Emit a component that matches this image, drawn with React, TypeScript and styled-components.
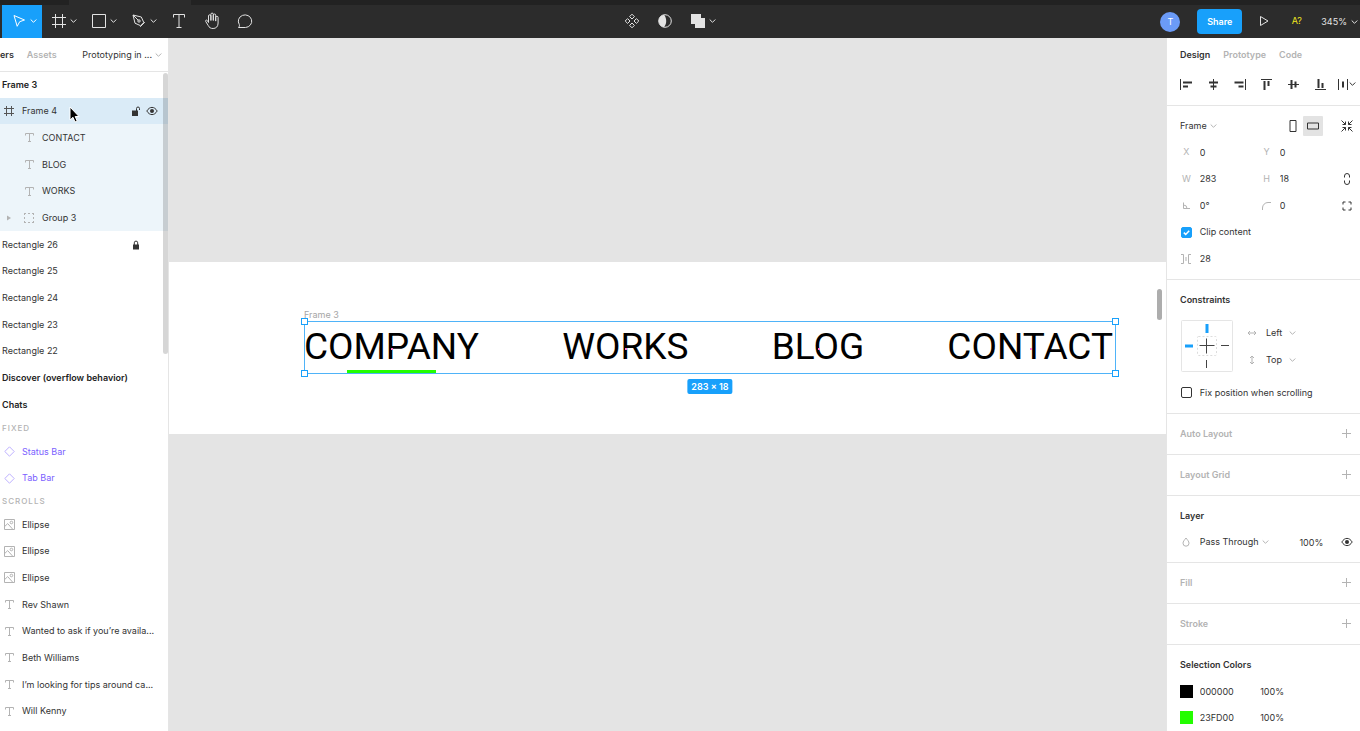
import React from "react";
import styled, { createGlobalStyle, css } from "styled-components";

const GlobalStyle = createGlobalStyle`
  *, *::before, *::after { box-sizing: border-box; }
  body { margin: 0; overflow: hidden; }
  button, input, select { font: inherit; color: inherit; }
  ul { list-style: none; margin: 0; padding: 0; }
`;

const plain = css`
  border: 0;
  padding: 0;
  margin: 0;
  background: none;
`;

/* ---------- Shell ---------- */

const Shell = styled.div`
  display: flex;
  flex-direction: column;
  height: 100vh;
  overflow: hidden;
  font-family: Inter, "Liberation Sans", sans-serif;
  font-size: 9px;
  line-height: 16px;
  color: #333;
  background: #fff;
`;

const WindowTabs = styled.div`
  flex: none;
  height: 5px;
  padding-left: 69px;
  background: #222;
`;

const WindowTab = styled.div`
  width: 122px;
  height: 5px;
  background: #2c2c2c;
`;

const Toolbar = styled.header`
  flex: none;
  display: grid;
  grid-template-columns: 1fr auto 1fr;
  height: 33px;
  background: #2c2c2c;
  color: #e3e3e3;
`;

const ToolGroup = styled.div<{ $side: "left" | "middle" | "right" }>`
  display: flex;
  align-items: center;
  justify-content: ${(p) => (p.$side === "right" ? "flex-end" : "flex-start")};
  padding-left: ${(p) => (p.$side === "left" ? 2 : 0)}px;
  padding-right: ${(p) => (p.$side === "middle" ? 24 : 0)}px;
`;

const Tool = styled.button<{ $active?: boolean; $menu?: boolean }>`
  ${plain}
  display: flex;
  align-items: center;
  justify-content: center;
  gap: 4px;
  width: ${(p) => (p.$menu ? 40 : 33)}px;
  height: 33px;
  padding: 0 0 1px ${(p) => (p.$menu ? 5 : 0)}px;
  background: ${(p) => (p.$active ? "#18a0fb" : "transparent")};
`;

const Avatar = styled.button`
  ${plain}
  width: 20px;
  height: 20px;
  margin-right: 17px;
  border-radius: 50%;
  background: #6b9bf7;
  color: #fff;
`;

const Share = styled.button`
  ${plain}
  width: 45px;
  height: 25px;
  margin-right: 5px;
  border-radius: 4px;
  background: #18a0fb;
  color: #fff;
  font-weight: 600;
`;

const FontWarning = styled(Tool)`
  color: #f0e61e;
`;

const ZoomMenu = styled.button`
  ${plain}
  display: flex;
  align-items: center;
  gap: 4px;
  padding: 0 2px 0 8px;
`;

const Main = styled.div`
  flex: 1;
  min-height: 0;
  display: grid;
  grid-template-columns: 169px 1fr 194px;
`;

/* ---------- Layers panel ---------- */

const LayersPanel = styled.aside`
  position: relative;
  overflow: hidden;
  border-right: 1px solid #e5e5e5;
`;

const PanelTabs = styled.div`
  display: flex;
  align-items: center;
  height: 33px;
  box-shadow: 0 1px 0 #e5e5e5;
`;

const Tab = styled.button<{ $on?: boolean }>`
  ${plain}
  margin-right: 13px;
  font-weight: 600;
  color: ${(p) => (p.$on ? "#333" : "#b3b3b3")};
`;

const PageMenu = styled.button`
  ${plain}
  display: flex;
  align-items: center;
  gap: 3px;
  margin-left: auto;
  padding-right: 6px;
`;

const rowHeight = css`
  height: 27px;
  &:nth-child(3n + 2) {
    height: 26px;
  }
`;

const LayerRow = styled.li<{ $tone?: "selected" | "child" }>`
  ${rowHeight}
  position: relative;
  display: flex;
  align-items: center;
  padding-right: 8px;
  background: ${(p) =>
    p.$tone === "selected" ? "#daebf7" : p.$tone === "child" ? "#edf5fa" : "transparent"};
`;

const Slot = styled.span`
  flex: none;
  display: flex;
  align-items: center;
  justify-content: center;
  width: 20px;
  height: 16px;
  padding-right: 2px;
  color: #b3b3b3;
`;

const LayerName = styled.button<{ $bold?: boolean; $component?: boolean }>`
  ${plain}
  flex: 1;
  min-width: 0;
  padding-left: 2px;
  text-align: left;
  white-space: nowrap;
  overflow: hidden;
  text-overflow: ellipsis;
  font-weight: ${(p) => (p.$bold ? 600 : 400)};
  color: ${(p) => (p.$component ? "#7b61ff" : p.$bold ? "#222" : "#333")};
`;

const RowAction = styled.button`
  ${plain}
  display: flex;
  align-items: center;
  justify-content: center;
  width: 16px;
  height: 16px;
  color: #333;
`;

const GroupLabel = styled.h3`
  height: 20px;
  margin: 0;
  padding-left: 2px;
  font-size: 8px;
  line-height: 20px;
  font-weight: 500;
  letter-spacing: 1px;
  color: #b3b3b3;
`;

const ListScrollbar = styled.div`
  position: absolute;
  top: 35px;
  right: 0;
  width: 5px;
  height: 281px;
  border-radius: 3px;
  background: rgba(0, 0, 0, 0.16);
`;

const Pointer = styled.svg`
  position: absolute;
  left: 68px;
  top: 8px;
`;

/* ---------- Canvas ---------- */

const Canvas = styled.main`
  position: relative;
  min-width: 0;
  padding-top: 224px;
  background: #e4e4e4;
`;

const Artboard = styled.section`
  height: 172px;
  padding: 45px 50px 0 135px;
  background: #fff;
`;

const FrameLabel = styled.div`
  height: 14px;
  line-height: 16px;
  color: #a6a6a6;
`;

const SelectedFrame = styled.div`
  position: relative;
  display: flex;
  justify-content: space-between;
  height: 53px;
  padding-right: 3px;
  outline: 1px solid #4fb3f8;
  outline-offset: -1px;
`;

const NavText = styled.span`
  position: relative;
  font-family: Roboto, sans-serif;
  font-size: 37px;
  line-height: 52px;
  color: #000;
`;

const CenterDot = styled.i`
  position: absolute;
  left: 50%;
  top: 50%;
  width: 2px;
  height: 2px;
  background: #ff7ad0;
`;

const Underline = styled.i`
  position: absolute;
  left: 43px;
  bottom: 1px;
  width: 89px;
  height: 3px;
  background: #23fd00;
`;

const Handle = styled.i<{ $x: "left" | "right"; $y: "top" | "bottom" }>`
  position: absolute;
  ${(p) => p.$x}: -3px;
  ${(p) => p.$y}: -3px;
  width: 7px;
  height: 7px;
  border: 1px solid #18a0fb;
  background: #fff;
`;

const SizeBadge = styled.output`
  position: absolute;
  left: 50%;
  top: 58px;
  transform: translateX(-50%);
  height: 15px;
  padding: 0 4px;
  border-radius: 2px;
  background: #18a0fb;
  color: #fff;
  font-weight: 600;
  line-height: 15px;
  white-space: nowrap;
`;

const CanvasScrollbar = styled.div`
  position: absolute;
  right: 4px;
  top: 251px;
  width: 5px;
  height: 31px;
  border-radius: 3px;
  background: #adadad;
`;

/* ---------- Inspector ---------- */

const Inspector = styled.aside`
  overflow: hidden;
  border-left: 1px solid #e5e5e5;
`;

const InspectorTabs = styled.div`
  display: flex;
  align-items: center;
  height: 33px;
  padding-left: 13px;
`;

const AlignBar = styled.div`
  display: grid;
  grid-template-columns: repeat(7, 1fr);
  height: 35px;
  padding: 0 0 8px 6px;
  border-bottom: 1px solid #e5e5e5;
`;

const IconButton = styled.button<{ $pressed?: boolean; $box?: boolean; $muted?: boolean }>`
  ${plain}
  display: flex;
  align-items: center;
  justify-content: center;
  width: ${(p) => (p.$box ? "20px" : "auto")};
  height: ${(p) => (p.$box ? "20px" : "auto")};
  border-radius: 1px;
  background: ${(p) => (p.$pressed ? "#e3e3e3" : "transparent")};
  color: ${(p) => (p.$muted ? "#b3b3b3" : "#333")};
`;

const Section = styled.section`
  padding: 6px 0 7px 6px;
  border-bottom: 1px solid #e5e5e5;
`;

const Row = styled.div`
  ${rowHeight}
  display: grid;
  grid-template-columns: repeat(7, 1fr);
  align-items: center;
`;

const Cell = styled.div<{ $from: number; $to: number; $inset?: boolean; $end?: boolean }>`
  grid-column: ${(p) => p.$from} / ${(p) => p.$to};
  grid-row: 1;
  display: flex;
  align-items: center;
  justify-content: ${(p) => (p.$end ? "flex-end" : "flex-start")};
  padding-left: ${(p) => (p.$inset ? 7 : 0)}px;
  padding-right: ${(p) => (p.$end ? 10 : 0)}px;
  min-width: 0;
`;

const Glyph = styled.label<{ $from: number }>`
  grid-column: ${(p) => p.$from};
  grid-row: 1;
  display: flex;
  align-items: center;
  justify-content: center;
  color: #b3b3b3;
`;

const LastIcon = styled(IconButton)`
  grid-column: 7;
  grid-row: 1;
`;

const Title = styled.h2<{ $muted?: boolean }>`
  margin: 0;
  font-size: 9px;
  font-weight: 600;
  white-space: nowrap;
  color: ${(p) => (p.$muted ? "#b3b3b3" : "#333")};
`;

const Field = styled.input`
  ${plain}
  width: 100%;
  min-width: 0;
  height: 20px;
`;

const OpacityField = styled(Field)`
  text-align: right;
`;

const Select = styled.select`
  ${plain}
  appearance: none;
  margin-right: 3px;
`;

const Check = styled.input`
  appearance: none;
  width: 11px;
  height: 11px;
  margin: 0;
  border: 1px solid #333;
  border-radius: 2px;
  &:checked {
    border-color: #18a0fb;
    background: #18a0fb;
  }
`;

const CheckHolder = styled.span`
  grid-column: 1;
  grid-row: 1;
  position: relative;
  display: flex;
  align-items: center;
  justify-content: center;
  svg {
    position: absolute;
    pointer-events: none;
  }
`;

const CheckLabel = styled.label`
  grid-column: 2 / 8;
  grid-row: 1;
  white-space: nowrap;
`;

const ConstraintBody = styled.div`
  display: flex;
  align-items: center;
  gap: 9px;
  padding: 6px 0 6px 7px;
`;

const ConstraintMenus = styled.div`
  display: flex;
  flex-direction: column;
`;

const ConstraintMenu = styled.label`
  display: flex;
  align-items: center;
  gap: 3px;
  height: 27px;
`;

const Swatch = styled.button<{ $color: string }>`
  ${plain}
  width: 13px;
  height: 13px;
  background: ${(p) => p.$color};
`;

/* ---------- Icons ---------- */

type IconProps = { w?: number; h?: number; color?: string; children: React.ReactNode };
const Icon = ({ w = 16, h = 16, color = "currentColor", children }: IconProps) => (
  <svg width={w} height={h} viewBox={`0 0 ${w} ${h}`} fill="none" stroke={color} aria-hidden="true">
    {children}
  </svg>
);

const Chevron = ({ color = "currentColor" }: { color?: string }) => (
  <Icon w={7} h={6} color={color}><path d="M.7 1.5 3.5 4.3 6.3 1.5" /></Icon>
);

const FrameToolIcon = () => (
  <Icon w={14} h={14}><path d="M3.5 0v14M10.5 0v14M0 3.5h14M0 10.5h14" /></Icon>
);

const FrameLayerIcon = () => (
  <Icon w={10} h={10} color="#555"><path d="M2.5 0v10M7.5 0v10M0 2.5h10M0 7.5h10" /></Icon>
);

const TextIcon = () => (
  <Icon w={9} h={9}><path d="M.5 2.5v-2h8v2M4.5.5v8M3 8.5h3" /></Icon>
);

const ImageIcon = () => (
  <Icon w={11} h={11}>
    <path d="M.5.5h10v10H.5zM.8 7.4 3.7 4.6l5 5.6" />
    <circle cx="7.4" cy="3.5" r="1.3" />
  </Icon>
);

const DiamondIcon = () => (
  <Icon w={11} h={11} color="#bdb0ff"><path d="M5.5.8 10.2 5.5 5.5 10.2.8 5.5z" /></Icon>
);

const GroupIcon = () => (
  <Icon w={10} h={10}>
    <path d="M0 .5h2M4 .5h2M8 .5h2M0 9.5h2M4 9.5h2M8 9.5h2M.5 1v1M.5 4v2M.5 8v1M9.5 1v1M9.5 4v2M9.5 8v1" />
  </Icon>
);

const EyeIcon = () => (
  <Icon w={12} h={10}>
    <path d="M.8 5C2.4 2.5 4 1.4 6 1.4S9.6 2.5 11.2 5C9.6 7.5 8 8.6 6 8.6S2.4 7.5.8 5z" />
    <circle cx="6" cy="5" r="2" fill="currentColor" stroke="none" />
  </Icon>
);

const LockIcon = ({ open }: { open?: boolean }) => (
  <Icon w={10} h={10}>
    <path d={open ? "M1 4.500h6V10H1z" : "M2 4.500h6V9.500H2z"} fill="currentColor" stroke="none" />
    <path d={open ? "M5.500 5V2.500a1.500 1.500 0 0 1 3 0V4" : "M3.300 5V2.800a1.700 1.700 0 0 1 3.400 0V5"} />
  </Icon>
);

const PlusIcon = () => (
  <Icon w={9} h={9}><path d="M4.5 0v9M0 4.5h9" /></Icon>
);

const alignIcons: { label: string; art: React.ReactNode }[] = [
  { label: "Align left", art: <><path d="M2.5 3v11" /><path d="M5 6.5h9M5 10.5h5" strokeWidth="2" /></> },
  { label: "Align horizontal centers", art: <><path d="M8.5 3v11" /><path d="M4 6.5h9M5.5 10.5h6" strokeWidth="2" /></> },
  { label: "Align right", art: <><path d="M13.5 3v11" /><path d="M2.5 6.5h9M6.5 10.5h5" strokeWidth="2" /></> },
  { label: "Align top", art: <><path d="M3 3.5h11" /><path d="M6.5 5v9M10.5 5v5" strokeWidth="2" /></> },
  { label: "Align vertical centers", art: <><path d="M3 8.5h11" /><path d="M6.5 4v9M10.5 5.5v6" strokeWidth="2" /></> },
  { label: "Align bottom", art: <><path d="M3 13.5h11" /><path d="M6.5 3v9M10.5 7v5" strokeWidth="2" /></> },
];

/* ---------- Data ---------- */

type Kind = "frame" | "text" | "group" | "component" | "image" | "rect" | "root";
type Layer = {
  name: string;
  kind: Kind;
  nested?: boolean;
  tone?: "selected" | "child";
  lock?: "open" | "closed";
  eye?: boolean;
};

const topLayers: Layer[] = [
  { name: "Frame 3", kind: "root" },
  { name: "Frame 4", kind: "frame", tone: "selected", lock: "open", eye: true },
  { name: "CONTACT", kind: "text", nested: true, tone: "child" },
  { name: "BLOG", kind: "text", nested: true, tone: "child" },
  { name: "WORKS", kind: "text", nested: true, tone: "child" },
  { name: "Group 3", kind: "group", nested: true, tone: "child" },
  { name: "Rectangle 26", kind: "rect", lock: "closed" },
  { name: "Rectangle 25", kind: "rect" },
  { name: "Rectangle 24", kind: "rect" },
  { name: "Rectangle 23", kind: "rect" },
  { name: "Rectangle 22", kind: "rect" },
  { name: "Discover (overflow behavior)", kind: "root" },
  { name: "Chats", kind: "root" },
];

const fixedLayers: Layer[] = [
  { name: "Status Bar", kind: "component" },
  { name: "Tab Bar", kind: "component" },
];

const scrollLayers: Layer[] = [
  { name: "Ellipse", kind: "image" },
  { name: "Ellipse", kind: "image" },
  { name: "Ellipse", kind: "image" },
  { name: "Rev Shawn", kind: "text" },
  { name: "Wanted to ask if you’re availa...", kind: "text" },
  { name: "Beth Williams", kind: "text" },
  { name: "I’m looking for tips around ca...", kind: "text" },
  { name: "Will Kenny", kind: "text" },
];

const kindIcon: Partial<Record<Kind, React.ReactNode>> = {
  frame: <FrameLayerIcon />,
  text: <TextIcon />,
  group: <GroupIcon />,
  component: <DiamondIcon />,
  image: <ImageIcon />,
};

const LayerList = ({ layers }: { layers: Layer[] }) => (
  <ul>
    {layers.map((l, i) => (
      <LayerRow key={i} $tone={l.tone}>
        {l.nested && (
          <Slot>
            {l.kind === "group" && (
              <svg width="8" height="8" viewBox="0 0 8 8" aria-hidden="true">
                <path d="M2 1.5v5L6 4z" fill="#b3b3b3" />
              </svg>
            )}
          </Slot>
        )}
        {kindIcon[l.kind] && <Slot>{kindIcon[l.kind]}</Slot>}
        <LayerName $bold={l.kind === "root"} $component={l.kind === "component"}>{l.name}</LayerName>
        {l.lock && (
          <RowAction aria-label={l.lock === "open" ? "Lock" : "Unlock"}><LockIcon open={l.lock === "open"} /></RowAction>
        )}
        {l.lock && <RowAction aria-label="Toggle visibility">{l.eye && <EyeIcon />}</RowAction>}
        {l.tone === "selected" && (
          <Pointer width="12" height="18" viewBox="0 0 12 18" aria-hidden="true">
            <path d="M2 1v13l3-2.7 2 4.7 2.2-1-2-4.5H11z" fill="#000" stroke="#fff" />
          </Pointer>
        )}
      </LayerRow>
    ))}
  </ul>
);

const Collapsed = ({ title }: { title: string }) => (
  <Section>
    <Row>
      <Cell $from={1} $to={7} $inset><Title $muted>{title}</Title></Cell>
      <LastIcon $muted aria-label={`Add ${title}`}><PlusIcon /></LastIcon>
    </Row>
  </Section>
);

type PairItem = { id: string; glyph: React.ReactNode; value: string };
const PairRow = ({ a, b, extra }: { a: PairItem; b?: PairItem; extra?: React.ReactNode }) => (
  <Row>
    <Glyph $from={1} htmlFor={a.id}>{a.glyph}</Glyph>
    <Cell $from={2} $to={4}><Field id={a.id} defaultValue={a.value} /></Cell>
    {b && <Glyph $from={4} htmlFor={b.id}>{b.glyph}</Glyph>}
    {b && <Cell $from={5} $to={7}><Field id={b.id} defaultValue={b.value} /></Cell>}
    {extra}
  </Row>
);

const ColorRow = ({ hex }: { hex: string }) => (
  <Row>
    <Cell $from={1} $to={2} $inset><Swatch $color={`#${hex}`} aria-label={`Color ${hex}`} /></Cell>
    <Cell $from={2} $to={4}><Field aria-label="Hex" defaultValue={hex} /></Cell>
    <Cell $from={4} $to={6} $inset><Field aria-label="Opacity" defaultValue="100%" /></Cell>
  </Row>
);

export default function App() {
  return (
    <Shell>
      <GlobalStyle />
      <WindowTabs><WindowTab /></WindowTabs>
      <Toolbar>
        <ToolGroup $side="left">
          <Tool $menu $active aria-label="Move">
            <Icon w={14} h={14} color="#fff"><path d="M2 1.500 12.500 6 7.700 7.700 5.200 12.300z" /></Icon>
            <Chevron color="#fff" />
          </Tool>
          <Tool $menu aria-label="Frame"><FrameToolIcon /><Chevron /></Tool>
          <Tool $menu aria-label="Shape">
            <Icon w={14} h={14}><path d="M.5.5h13v13H.5z" /></Icon>
            <Chevron />
          </Tool>
          <Tool $menu aria-label="Pen">
            <Icon w={14} h={14}>
              <path d="M1 1 3 9.200 8.600 11.700 11.800 8.500 9.300 3zM1 1l5.200 5.200M8.200 12.800l4.600-4.600" />
              <circle cx="7" cy="7" r="1.200" />
            </Icon>
            <Chevron />
          </Tool>
          <Tool aria-label="Text">
            <Icon w={12} h={14}><path d="M.5 3.500V.5h11v3M6 .5v13M3.500 13.500h5" /></Icon>
          </Tool>
          <Tool aria-label="Hand">
            <Icon w={16} h={18}>
              <path d="M4.500 10.500V4a1.200 1.200 0 0 1 2.400 0v4.500V2.300a1.200 1.200 0 0 1 2.400 0v6.200V3.200a1.200 1.200 0 0 1 2.400 0v5.900V5.500a1.200 1.200 0 0 1 2.400 0V11c0 3.500-2 5.500-5 5.500-2.600 0-3.900-1-4.900-3L1.700 9.400c-.5-1.200 1-1.900 1.700-.8l1.100 1.900" />
            </Icon>
          </Tool>
          <Tool aria-label="Comment">
            <Icon w={16} h={16}><path d="M1.500 14.500c.9-.9 1.200-2 .8-3A6.700 6.300 0 1 1 8.500 14.500z" /></Icon>
          </Tool>
        </ToolGroup>

        <ToolGroup $side="middle">
          <Tool aria-label="Create component">
            <Icon w={16} h={16}>
              <path d="M8 1.200 10.400 3.600 8 6 5.600 3.600zM8 10l2.400 2.400L8 14.800l-2.400-2.400zM3.600 5.600 6 8l-2.400 2.400L1.200 8zM12.400 5.600 14.800 8l-2.400 2.400L10 8z" />
            </Icon>
          </Tool>
          <Tool aria-label="Use as mask">
            <Icon w={14} h={14}>
              <circle cx="7" cy="7" r="6.300" />
              <path d="M6 .8a6.300 6.300 0 0 0 0 12.400C7.800 11 8.200 9 8.200 7S7.800 3 6 .8z" fill="currentColor" stroke="none" />
            </Icon>
          </Tool>
          <Tool $menu aria-label="Union">
            <Icon w={14} h={14}><path d="M0 0h10v4h4v10H4v-4H0z" fill="currentColor" stroke="none" /></Icon>
            <Chevron />
          </Tool>
        </ToolGroup>

        <ToolGroup $side="right">
          <Avatar aria-label="Account">T</Avatar>
          <Share>Share</Share>
          <Tool aria-label="Present">
            <Icon w={10} h={12}><path d="M1.500 1.500v9L9 6z" /></Icon>
          </Tool>
          <FontWarning>A?</FontWarning>
          <ZoomMenu>345%<Chevron /></ZoomMenu>
        </ToolGroup>
      </Toolbar>

      <Main>
        <LayersPanel>
          <PanelTabs>
            <Tab $on>ers</Tab>
            <Tab>Assets</Tab>
            <PageMenu>Prototyping in ...<Chevron color="#b3b3b3" /></PageMenu>
          </PanelTabs>
          <LayerList layers={topLayers} />
          <GroupLabel>FIXED</GroupLabel>
          <LayerList layers={fixedLayers} />
          <GroupLabel>SCROLLS</GroupLabel>
          <LayerList layers={scrollLayers} />
          <ListScrollbar />
        </LayersPanel>

        <Canvas>
          <Artboard>
            <FrameLabel>Frame 3</FrameLabel>
            <SelectedFrame>
              {["COMPANY", "WORKS", "BLOG", "CONTACT"].map((t) => (
                <NavText key={t}>{t}<CenterDot /></NavText>
              ))}
              <Underline />
              <Handle $x="left" $y="top" />
              <Handle $x="right" $y="top" />
              <Handle $x="left" $y="bottom" />
              <Handle $x="right" $y="bottom" />
              <SizeBadge>283 × 18</SizeBadge>
            </SelectedFrame>
          </Artboard>
          <CanvasScrollbar />
        </Canvas>

        <Inspector>
          <InspectorTabs>
            <Tab $on>Design</Tab>
            <Tab>Prototype</Tab>
            <Tab>Code</Tab>
          </InspectorTabs>
          <AlignBar>
            {alignIcons.map((a) => (
              <IconButton key={a.label} aria-label={a.label}><Icon>{a.art}</Icon></IconButton>
            ))}
            <IconButton aria-label="Distribute">
              <Icon w={12} h={16}><path d="M1.500 3v11M10.500 3v11" /><path d="M6 5.500v6" strokeWidth="2" /></Icon>
              <Chevron />
            </IconButton>
          </AlignBar>

          <Section>
            <Row>
              <Cell $from={1} $to={4} $inset>
                <Select aria-label="Frame preset"><option>Frame</option></Select>
                <Chevron color="#b3b3b3" />
              </Cell>
              <Cell $from={4} $to={7} $end>
                <IconButton $box aria-label="Portrait"><Icon w={8} h={12}><path d="M1 .5h6v11H1z" /></Icon></IconButton>
                <IconButton $box $pressed aria-label="Landscape"><Icon w={12} h={8}><path d="M.5 1h11v6H.5z" /></Icon></IconButton>
              </Cell>
              <LastIcon aria-label="Resize to fit">
                <Icon w={12} h={12}>
                  <path d="M.5.5l4 4M1.500 4.500h3v-3M11.500.5l-4 4M7.500 1.500v3h3M.5 11.500l4-4M1.500 7.500h3v3M11.500 11.500l-4-4M7.500 10.500v-3h3" />
                </Icon>
              </LastIcon>
            </Row>
            <PairRow a={{ id: "x", glyph: "X", value: "0" }} b={{ id: "y", glyph: "Y", value: "0" }} />
            <PairRow
              a={{ id: "w", glyph: "W", value: "283" }}
              b={{ id: "h", glyph: "H", value: "18" }}
              extra={
                <LastIcon aria-label="Constrain proportions">
                  <Icon w={8} h={12}><path d="M1.500 4.500V3a2.500 2.500 0 0 1 5 0v1.500M1.500 7.500V9a2.500 2.500 0 0 0 5 0V7.500" /></Icon>
                </LastIcon>
              }
            />
            <PairRow
              a={{ id: "rot", glyph: <Icon w={8} h={8}><path d="M1.500.5v6H8M1.500 3a3.500 3.500 0 0 1 3.500 3.500" /></Icon>, value: "0°" }}
              b={{ id: "rad", glyph: <Icon w={9} h={8}><path d="M.5 8V6A5.500 5.500 0 0 1 6 .5h3" /></Icon>, value: "0" }}
              extra={
                <LastIcon aria-label="Independent corners">
                  <Icon w={10} h={10}><path d="M1 3.500V1h2.500M6.500 1H9v2.500M9 6.500V9H6.500M3.500 9H1V6.500" /></Icon>
                </LastIcon>
              }
            />
            <Row>
              <CheckHolder>
                <Check id="clip" type="checkbox" defaultChecked />
                <svg width="9" height="9" viewBox="0 0 9 9" fill="none" stroke="#fff" strokeWidth="1.500"><path d="M1.800 4.600 3.700 6.400 7.200 2.700" /></svg>
              </CheckHolder>
              <CheckLabel htmlFor="clip">Clip content</CheckLabel>
            </Row>
            <PairRow
              a={{
                id: "gap",
                glyph: <Icon w={12} h={12}><path d="M1 1.500h2.500v9H1M11 1.500H8.500v9H11M6 4v4" /></Icon>,
                value: "28",
              }}
            />
          </Section>

          <Section>
            <Row><Cell $from={1} $to={7} $inset><Title>Constraints</Title></Cell></Row>
            <ConstraintBody>
              <svg width="54" height="54" viewBox="0 0 54 54" fill="none" role="img" aria-label="Constraints: left, top">
                <rect x="1.500" y="1.500" width="51" height="51" rx="1" stroke="#e5e5e5" />
                <rect x="17.500" y="17.500" width="19" height="19" rx="1" stroke="#dcdcdc" strokeDasharray="2 2" />
                <path d="M27 5v9M5 27h8" stroke="#18a0fb" strokeWidth="3" />
                <path d="M26.500 19.500v15M19.500 26.500h15M26.500 41v8M41 26.500h8" stroke="#444" />
              </svg>
              <ConstraintMenus>
                <ConstraintMenu>
                  <Slot><Icon w={10} h={6}><path d="M1 3h8M3 1 1 3l2 2M7 1l2 2-2 2" /></Icon></Slot>
                  <Select aria-label="Horizontal constraint"><option>Left</option></Select>
                  <Chevron color="#b3b3b3" />
                </ConstraintMenu>
                <ConstraintMenu>
                  <Slot><Icon w={6} h={10}><path d="M3 1v8M1 3l2-2 2 2M1 7l2 2 2-2" /></Icon></Slot>
                  <Select aria-label="Vertical constraint"><option>Top</option></Select>
                  <Chevron color="#b3b3b3" />
                </ConstraintMenu>
              </ConstraintMenus>
            </ConstraintBody>
            <Row>
              <CheckHolder><Check id="fix" type="checkbox" /></CheckHolder>
              <CheckLabel htmlFor="fix">Fix position when scrolling</CheckLabel>
            </Row>
          </Section>

          <Collapsed title="Auto Layout" />
          <Collapsed title="Layout Grid" />

          <Section>
            <Row><Cell $from={1} $to={7} $inset><Title>Layer</Title></Cell></Row>
            <Row>
              <Glyph $from={1} htmlFor="blend">
                <Icon w={8} h={10}><path d="M4 1C2.500 3 1 4.500 1 6.200a3 3 0 0 0 6 0C7 4.500 5.500 3 4 1z" /></Icon>
              </Glyph>
              <Cell $from={2} $to={5}>
                <Select id="blend"><option>Pass Through</option></Select>
                <Chevron color="#b3b3b3" />
              </Cell>
              <Cell $from={5} $to={7} $end><OpacityField aria-label="Layer opacity" defaultValue="100%" /></Cell>
              <LastIcon aria-label="Toggle visibility"><EyeIcon /></LastIcon>
            </Row>
          </Section>

          <Collapsed title="Fill" />
          <Collapsed title="Stroke" />

          <Section>
            <Row><Cell $from={1} $to={7} $inset><Title>Selection Colors</Title></Cell></Row>
            <ColorRow hex="000000" />
            <ColorRow hex="23FD00" />
          </Section>
        </Inspector>
      </Main>
    </Shell>
  );
}
